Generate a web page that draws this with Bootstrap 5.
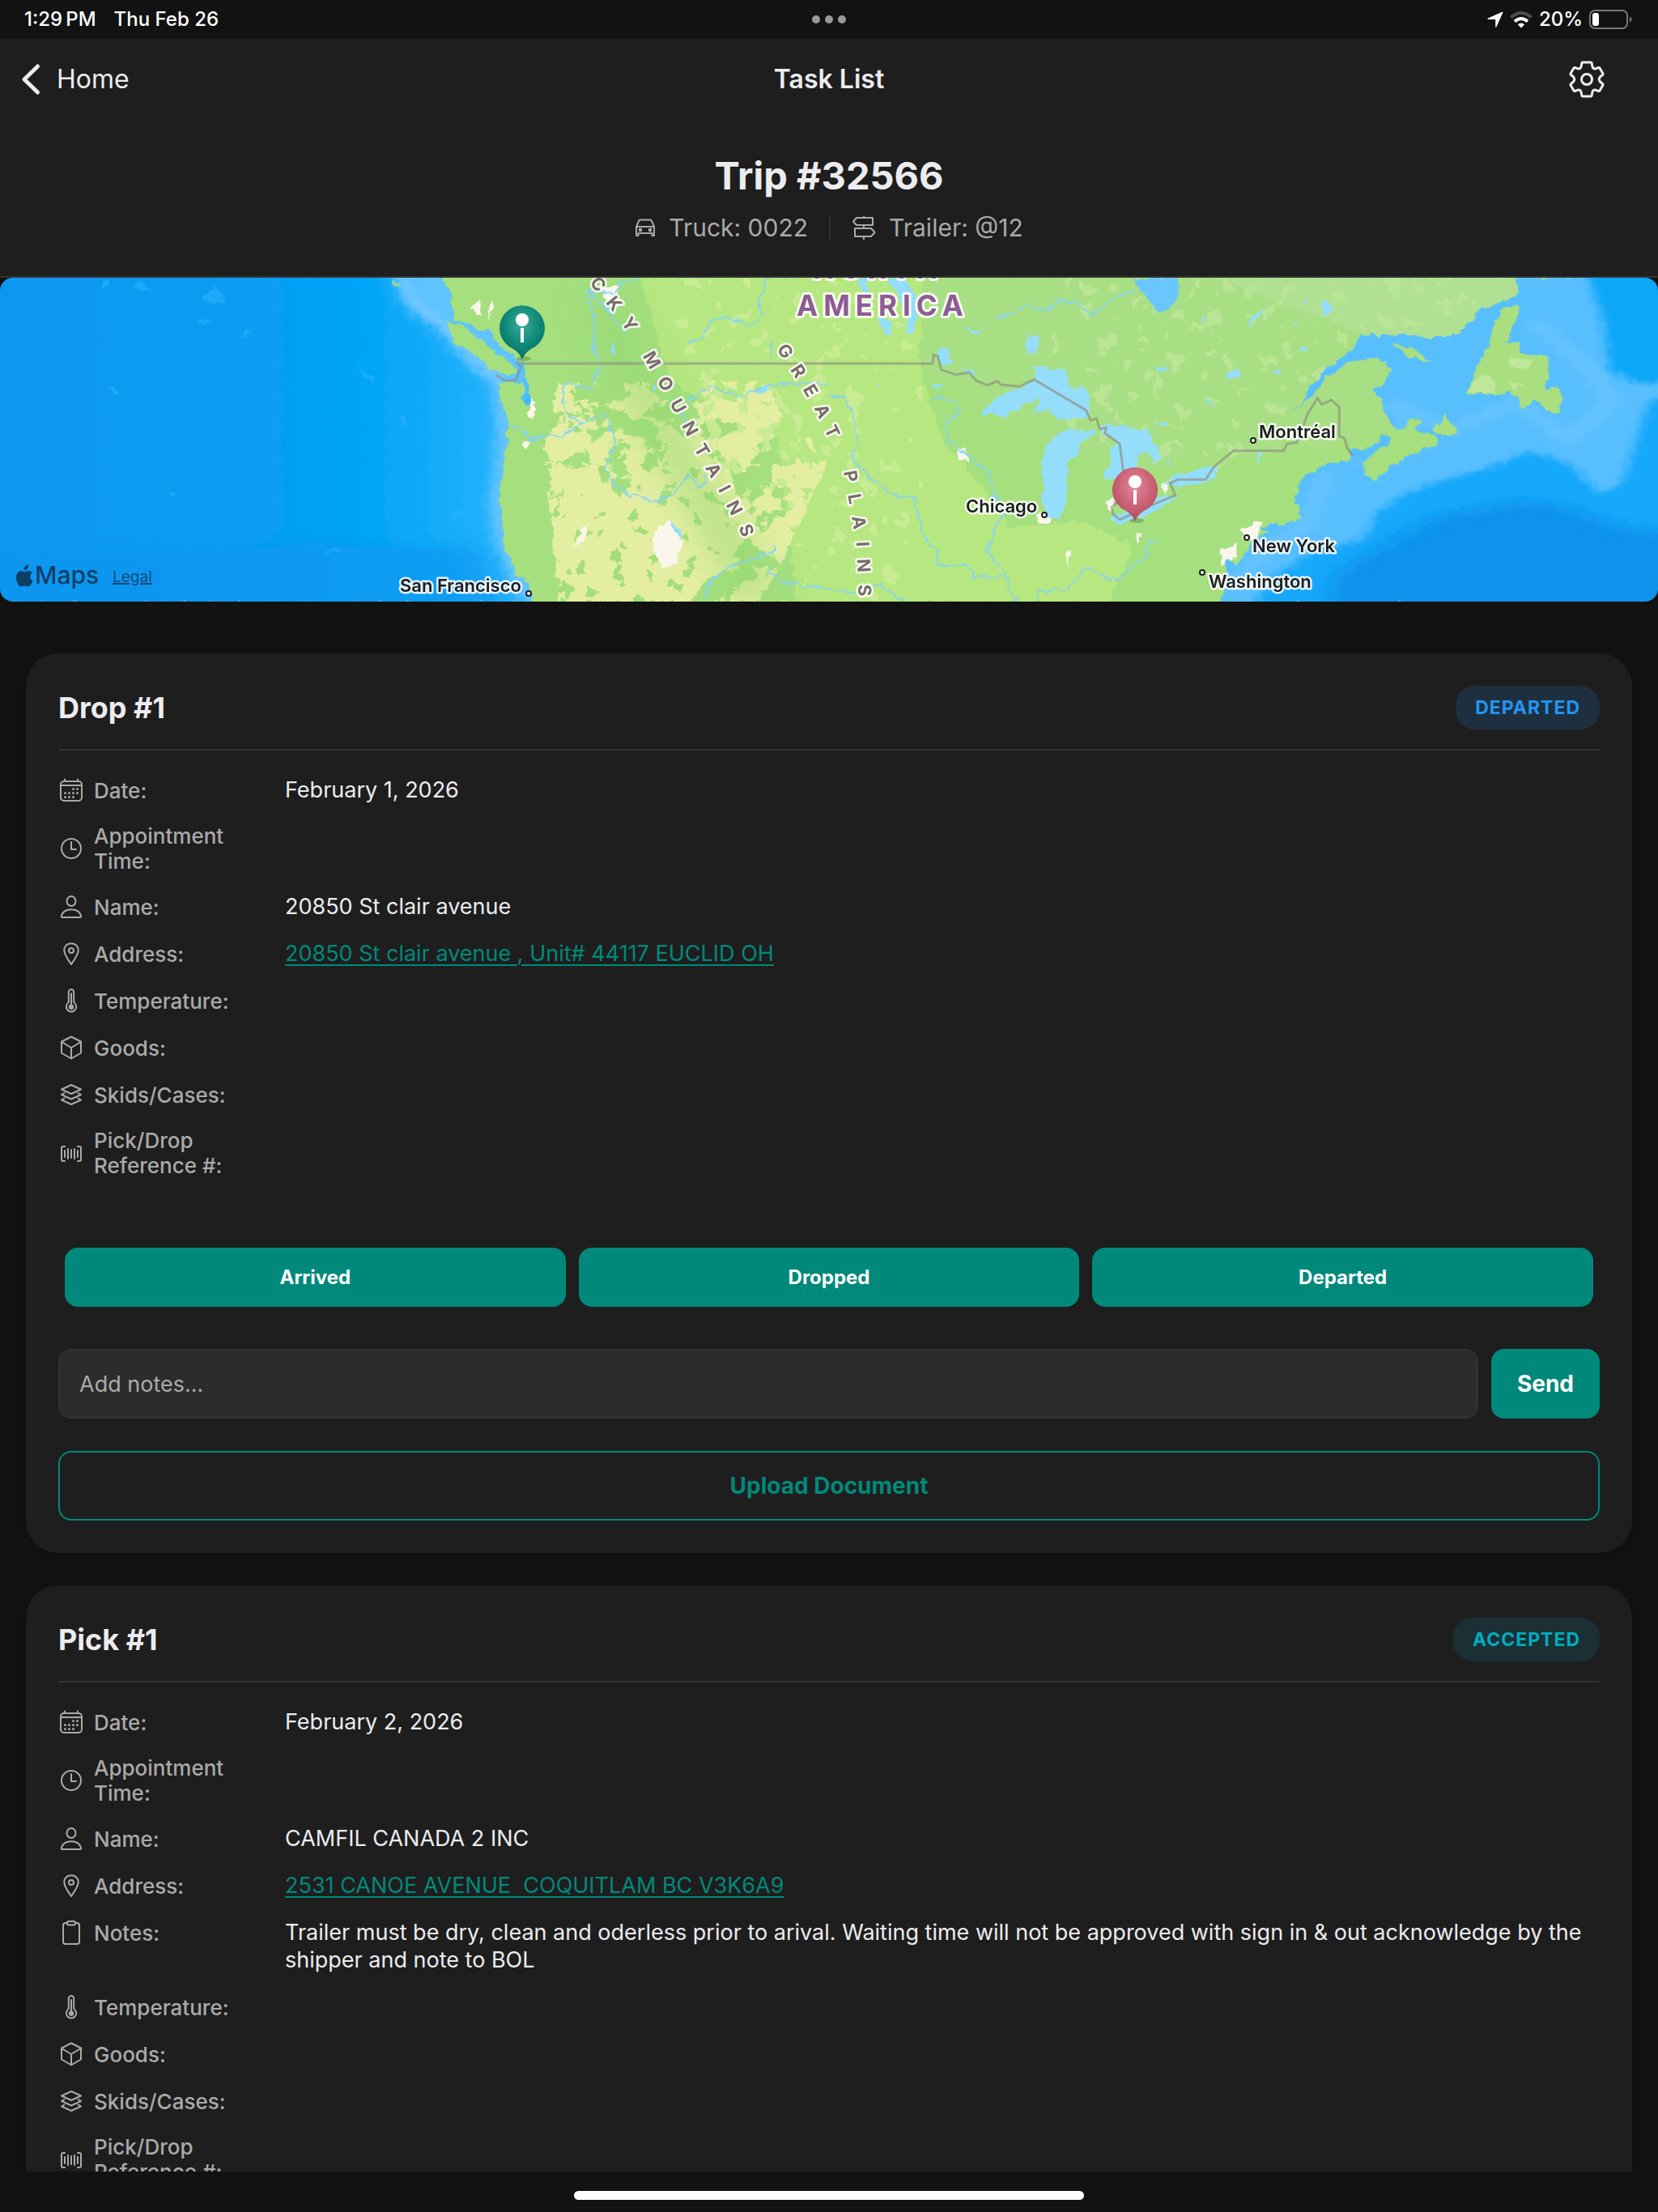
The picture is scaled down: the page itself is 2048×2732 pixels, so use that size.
<!DOCTYPE html>
<html lang="en">
<head>
<meta charset="utf-8">
<meta name="viewport" content="width=device-width, initial-scale=1">
<title>Task List</title>
<link rel="stylesheet" href="https://cdn.jsdelivr.net/npm/bootstrap@5.3.0/dist/css/bootstrap.min.css">
<style>
  :root { --teal: #00897b; --surface: #1e1e1e; --page: #121212; --line: #333333; --muted: #aaaaaa; --ink: #ececee; }
  body { font-family: Inter, "Liberation Sans", sans-serif; background: var(--page); color: var(--ink); }
  svg { display: block; flex-shrink: 0; }
  .status-strip { height: 48px; padding: 0 30px; font-size: 24px; line-height: 32px; font-weight: 500; color: #fff; }
  .status-left { gap: 22px; }
  .app-bar { height: 101px; background: var(--surface); border-bottom: 1px solid #171717; padding: 0 24px; font-size: 32px; line-height: 40px; }
  .app-bar a { color: var(--ink); gap: 18px; }
  .app-bar .btn { margin-right: 42px; }
  .trip-head { background: var(--surface); border-bottom: 2px solid var(--line); padding: 40px 0; }
  .trip-head h1 { font-size: 47px; line-height: 56px; font-weight: 700; }
  .trip-meta { font-size: 30px; line-height: 40px; color: var(--muted); margin-top: 16px; }
  .trip-split { width: 2px; height: 29px; background: var(--line); margin: 0 26px; }
  .trip-map { width: 100%; height: 400px; border-radius: 16px; overflow: hidden; }
  .stop-list { padding: 64px 32px 0; gap: 40px; min-height: 0; }
  .stop { background: var(--surface); border-radius: 40px; padding: 40px; flex-shrink: 0; box-shadow: 0 4px 16px rgba(0,0,0,.2); }
  .stop-head { padding-bottom: 24px; border-bottom: 2px solid var(--line); margin-bottom: 32px; }
  .stop-head h2 { font-size: 36px; line-height: 54px; font-weight: 700; }
  .state { height: 54px; border-radius: 24px; padding: 0 24px; font-size: 23px; line-height: 54px; font-weight: 700; letter-spacing: 1px; }
  .state-departed { color: #2196f3; background: #1e3040; }
  .state-accepted { color: #00acc1; background: #1b3034; }
  .facts { gap: 24px; margin-bottom: 86px; }
  .fact-name { width: 248px; min-height: 34px; gap: 12px; font-size: 26px; line-height: 31px; font-weight: 500; color: var(--muted); }
  .fact-name span { max-width: 190px; }
  .fact { gap: 32px; }
  .fact-value { font-size: 27px; line-height: 34px; }
  .fact-value a { color: var(--teal); text-underline-offset: 4px; text-decoration-thickness: 2px; }
  .btn-teal { --bs-btn-bg: var(--teal); --bs-btn-color: #fff; --bs-btn-hover-bg: #00796b; --bs-btn-hover-color: #fff; --bs-btn-border-width: 0; --bs-btn-border-radius: 16px; font-weight: 700; }
  .steps { gap: 16px; padding: 0 8px; margin-bottom: 52px; }
  .steps .btn { height: 73px; font-size: 24px; line-height: 32px; }
  .note-row { gap: 16px; margin-bottom: 40px; }
  .note-row .form-control { height: 86px; background: #2c2c2c; border: 2px solid var(--line); border-radius: 16px; color: var(--ink); font-size: 27px; padding: 0 24px; }
  .note-row .form-control::placeholder { color: var(--muted); opacity: 1; }
  .note-row .btn { height: 86px; font-size: 28px; padding: 0 32px; }
  .btn-upload { height: 86px; border: 2px solid var(--teal); border-radius: 16px; color: var(--teal); font-size: 28px; font-weight: 700; }
  .home-strip { height: 50px; }
  .home-strip span { width: 630px; height: 11px; border-radius: 6px; background: #fff; margin-top: 24px; }
  .ic { fill: none; stroke: var(--muted); stroke-width: 2; stroke-linejoin: round; stroke-linecap: round; }
  .rv { fill: none; stroke: #86d3f6; stroke-width: 2; vector-effect: non-scaling-stroke; }
  .frontier { fill: none; stroke: #8c8d80; stroke-opacity: .65; stroke-width: 3; vector-effect: non-scaling-stroke; }
  .tag { font-size: 22px; font-weight: 600; fill: #1d1d1f; stroke: #fff; stroke-opacity: .85; stroke-width: 5; stroke-linejoin: round; paint-order: stroke; }
  .relief { font-size: 22px; font-weight: 700; fill: #7a6b68; stroke: #fff; stroke-opacity: .85; stroke-width: 5; stroke-linejoin: round; paint-order: stroke; }
  .realm { font-size: 35px; font-weight: 700; fill: #905a96; stroke: #fff; stroke-opacity: .85; stroke-width: 6; stroke-linejoin: round; paint-order: stroke; letter-spacing: 7px; }
  .town { fill: #fff; stroke: #1d1d1f; stroke-width: 2; }
</style>
</head>
<body>
<svg class="d-none" aria-hidden="true">
  <symbol id="i-date" viewBox="0 0 32 32"><g class="ic"><rect x="3" y="5" width="26" height="24" rx="4"/><path d="M3 10H29M8 2.500V5M24 2.500V5"/></g><g fill="#aaa"><circle cx="18.500" cy="14.500" r="1.500"/><circle cx="23.500" cy="14.500" r="1.500"/><circle cx="8.500" cy="19.500" r="1.500"/><circle cx="13.500" cy="19.500" r="1.500"/><circle cx="18.500" cy="19.500" r="1.500"/><circle cx="23.500" cy="19.500" r="1.500"/><circle cx="8.500" cy="24.500" r="1.500"/><circle cx="13.500" cy="24.500" r="1.500"/><circle cx="18.500" cy="24.500" r="1.500"/></g></symbol>
  <symbol id="i-time" viewBox="0 0 32 32"><g class="ic"><circle cx="16" cy="16" r="12"/><path d="M16 8V17H22"/></g></symbol>
  <symbol id="i-name" viewBox="0 0 32 32"><g class="ic"><ellipse cx="16" cy="9" rx="5.500" ry="6"/><path d="M5 29C3.800 29 3.600 28 4 26.800C5.600 22 10 19.300 16 19.300S26.400 22 28 26.800C28.400 28 28.200 29 27 29Z"/></g></symbol>
  <symbol id="i-pin" viewBox="0 0 32 32"><g class="ic"><path d="M16 29C14 26 7.300 17.500 7.300 11.500C7.300 6.500 11 3.300 16 3.300S24.700 6.500 24.700 11.500C24.700 17.500 18 26 16 29Z"/><circle cx="16" cy="12" r="3"/></g></symbol>
  <symbol id="i-temp" viewBox="0 0 32 32"><g class="ic"><path d="M12.800 18V5.200A3.200 3.200 0 0 1 19.200 5.200V18A6.200 6.200 0 1 1 12.800 18Z"/><path d="M16 7V23"/></g><circle cx="16" cy="23.700" r="3.200" fill="#aaa"/></symbol>
  <symbol id="i-box" viewBox="0 0 32 32"><g class="ic"><path d="M16 2.500L28 8.500V22.500L16 29.500L4 22.500V8.500ZM4.300 9L16 16L27.700 9M16 16V29"/></g></symbol>
  <symbol id="i-stack" viewBox="0 0 32 32"><g class="ic"><path d="M16 4L28 9.500L16 15L4 9.500ZM7.500 14L4 16L16 21.500L28 16L24.500 14M7.500 20.500L4 22.500L16 28L28 22.500L24.500 20.500"/></g></symbol>
  <symbol id="i-code" viewBox="0 0 32 32"><g class="ic"><path d="M8 8H6A2 2 0 0 0 4 10V24A2 2 0 0 0 6 26H8M24 8H26A2 2 0 0 1 28 10V24A2 2 0 0 1 26 26H24M8 13V21M12 11V23M16 12V22M20 11V23M24 13V21"/></g></symbol>
  <symbol id="i-note" viewBox="0 0 32 32"><g class="ic"><path d="M11 4H9A3 3 0 0 0 6 7V27A3 3 0 0 0 9 30H23A3 3 0 0 0 26 27V7A3 3 0 0 0 23 4H21"/><rect x="11" y="2" width="10" height="4.500" rx="2"/></g></symbol>
</svg>

<div class="vh-100 d-flex flex-column overflow-hidden">
  <div class="status-strip row g-0 align-items-center flex-shrink-0">
    <div class="col d-flex status-left"><span>1:29&#8239;PM</span><span>Thu Feb 26</span></div>
    <div class="col-auto"><svg width="42" height="10" viewBox="0 0 42 10" fill="#999"><circle cx="5" cy="5" r="5"/><circle cx="21" cy="5" r="5"/><circle cx="37" cy="5" r="5"/></svg></div>
    <div class="col d-flex justify-content-end align-items-center">
      <svg class="me-2" width="20" height="20" viewBox="0 0 20 20" fill="#fff"><path d="M18.500 .8C19.300 .5 19.700 1 19.300 1.800L11.500 19C11.100 20 10.200 19.800 10.200 18.800V10.400C10.200 10 10 9.900 9.700 9.900H1.300C.3 9.900 .1 9 1 8.500Z"/></svg>
      <svg class="me-2" width="28" height="21" viewBox="0 0 28 21" fill="none" stroke-width="4"><path stroke="#4c4c4c" d="M1.500 7.500Q14 -3.500 26.500 7.500"/><path stroke="#fff" d="M6 12.500Q14 5.500 22 12.500"/><path fill="#fff" d="M14 20.500L9.800 16.200Q14 12.800 18.200 16.200Z"/></svg>
      <span class="me-2">20%</span>
      <svg width="55" height="24" viewBox="0 0 55 24"><rect x="1" y="1" width="46" height="22" rx="6" fill="none" stroke="#777" stroke-width="2"/><rect x="4" y="4" width="8" height="16" rx="3" fill="#fff"/><path d="M50 8Q55 12 50 16Z" fill="#777"/></svg>
    </div>
  </div>

  <nav class="app-bar row g-0 align-items-center flex-shrink-0" aria-label="Main">
    <div class="col d-flex"><a href="#" class="d-flex align-items-center text-decoration-none"><svg width="28" height="40" viewBox="0 0 28 40" fill="none" stroke="#ececee" stroke-width="5" stroke-linecap="round" stroke-linejoin="round"><path d="M22.500 4L6 20L22.500 36"/></svg>Home</a></div>
    <div class="col-auto fw-semibold">Task List</div>
    <div class="col d-flex justify-content-end">
      <button type="button" class="btn p-0 border-0" aria-label="Settings"><svg width="44" height="46" viewBox="-22 -23 44 46" fill="none" stroke="#ececee" stroke-width="3" stroke-linejoin="round"><circle r="6.500"/><path d="M-6 -20.500Q-5.800 -21 -5 -21H5Q5.800 -21 6 -20.500L7 -15.500Q8 -12.500 11 -13.200L14.500 -14.500Q15.500 -14.700 16 -14L20 -7Q20.300 -6.300 19.500 -5.500L16.500 -3Q14 0 16.500 3L19.500 5.500Q20.300 6.300 20 7L16 14Q15.500 14.700 14.500 14.500L11 13.200Q8 12.500 7 15.500L6 20.500Q5.800 21 5 21H-5Q-5.800 21 -6 20.500L-7 15.500Q-8 12.500 -11 13.200L-14.500 14.500Q-15.500 14.700 -16 14L-20 7Q-20.300 6.300 -19.500 5.500L-16.500 3Q-14 0 -16.500 -3L-19.500 -5.500Q-20.300 -6.300 -20 -7L-16 -14Q-15.500 -14.700 -14.500 -14.500L-11 -13.200Q-8 -12.500 -7 -15.500Z"/></svg></button>
    </div>
  </nav>

  <header class="trip-head flex-shrink-0 text-center">
    <h1 class="mb-0">Trip #32566</h1>
    <div class="trip-meta d-flex justify-content-center align-items-center">
      <svg class="me-3" width="26" height="24" viewBox="0 0 26 24" fill="none" stroke="#aaa" stroke-width="2" stroke-linejoin="round"><path d="M2 22V11L5 4Q5.400 2.500 7 2.500H19Q20.600 2.500 21 4L24 11V22H21.500V19H4.500V22ZM2 11H24"/><path fill="#aaa" stroke="none" d="M5 13H9V17H5ZM17 13H21V17H17Z"/></svg>
      <span>Truck: 0022</span>
      <span class="trip-split"></span>
      <svg class="me-3" width="30" height="30" viewBox="0 0 30 30" fill="none" stroke="#aaa" stroke-width="2" stroke-linejoin="round"><path d="M15 1V3M15 12V16M15 26V30M6 3H26V12H6L2 7.500ZM4 16H24L28.500 21L24 26H4Z"/></svg>
      <span>Trailer: @12</span>
    </div>
  </header>

  <svg class="trip-map flex-shrink-0" viewBox="0 0 2048 400" preserveAspectRatio="xMidYMid slice" role="img" aria-label="Trip route map">
    <defs>
      <linearGradient id="sea" x1="0" x2="1"><stop offset="0" stop-color="#0a98f0"/><stop offset=".45" stop-color="#0b9cf3"/><stop offset=".68" stop-color="#00a4f6"/><stop offset=".9" stop-color="#1eb0fb"/><stop offset="1" stop-color="#3dbaff"/></linearGradient>
      <radialGradient id="gp" cx=".5" cy=".35" r=".7"><stop offset="0" stop-color="#3fae9d"/><stop offset=".5" stop-color="#128b7b"/><stop offset="1" stop-color="#00695c"/></radialGradient>
      <radialGradient id="rp" cx=".5" cy=".35" r=".7"><stop offset="0" stop-color="#e2899a"/><stop offset=".5" stop-color="#cd6479"/><stop offset="1" stop-color="#a8485c"/></radialGradient>
      <filter id="jag" x="0" y="0" width="1" height="1"><feTurbulence type="fractalNoise" baseFrequency=".09" numOctaves="3" seed="4"/><feDisplacementMap in="SourceGraphic" scale="11" xChannelSelector="R" yChannelSelector="G"/></filter>
      <filter id="patch" x="0" y="0" width="1" height="1"><feTurbulence type="fractalNoise" baseFrequency=".022 .026" numOctaves="4" seed="21"/><feColorMatrix values="0 0 0 0 0  0 0 0 0 0  0 0 0 0 0  40 0 0 0 -19"/><feComposite in="SourceGraphic" operator="in"/></filter>
      <filter id="fleck" x="0" y="0" width="1" height="1"><feTurbulence type="fractalNoise" baseFrequency=".045" numOctaves="3" seed="7"/><feColorMatrix values="0 0 0 0 0  0 0 0 0 0  0 0 0 0 0  30 0 0 0 -19"/><feComposite in="SourceGraphic" operator="in"/></filter>
      <filter id="soft" x="-.3" y="-.3" width="1.600" height="1.600"><feGaussianBlur stdDeviation="10"/></filter>
      <filter id="haze" x="-.4" y="-.4" width="1.800" height="1.800"><feGaussianBlur stdDeviation="22"/></filter>
      <clipPath id="eastSea"><path id="eastCoast" d="M1303 39L1300 110L1225 160L1215 200L1185 250L1130 262L1060 250L1005 255L980 320L945 370L915 430L895 500L870 540L915 475L940 410L985 350L1040 335L1065 380L1055 420L1025 460L1045 480L1048 530L1060 580L1085 600L1100 562L1125 570L1110 610L1150 628L1150 660L1100 690L1060 740L1035 790L1012 770L1015 720L1060 640L1050 620L1020 670L990 680L985 715L940 730L900 770L885 830L880 880L895 930L860 955L815 960L832 985L800 1010L790 1060L770 1100L750 1090L755 1170L740 1245H1600V30Z"/></clipPath>
      <clipPath id="westSea"><path id="westCoast" d="M-20 30H835L850 90L852 130L860 190L895 225L925 235L945 290L975 340L990 360L998 430L1005 505L990 510L990 430L965 425L942 420L945 480L958 560L960 640L950 760L945 850L950 950L952 1030L965 1080L975 1130L1000 1180L1006 1245H-20Z"/></clipPath>
    </defs>
    <g filter="url(#jag)">
      <rect x="-10" y="-10" width="2068" height="420" fill="#a5df7e"/>
      <path d="M790 0H1140L1135 110L1165 200L1240 290L1270 400H985L960 200L830 130Z" fill="#b6e781"/>
      <path d="M1140 0H1900V120L1640 210L1400 240L1260 190L1140 110Z" fill="#a9df84"/>
      <path d="M1500 0H1875V60L1800 85L1690 70Z" fill="#b0e092"/>
      <path d="M1190 400L1200 315L1330 300L1400 330L1370 400Z" fill="#b6e781"/>
      <path filter="url(#patch)" d="M690 130L960 130L1020 230L990 300L940 400H690L670 210Z" fill="#e3eea3"/>
      <path d="M700 240L735 230L760 265L820 280L850 250L870 215L900 230L915 290L890 345L850 350L830 400H700L680 330Z" fill="#e3eea3"/>
      <path filter="url(#fleck)" d="M690 130L1000 130L1020 400H690Z" fill="#a4de79"/>
      <path filter="url(#fleck)" d="M800 0H1140V400H960Z" fill="#c8eb94"/>
      <path filter="url(#fleck)" d="M1300 0H1860V60L1700 60L1500 250L1300 200Z" fill="#b9e595"/>
      <path filter="url(#haze)" d="M740 30L800 160L880 290L940 400" fill="none" stroke="#92d670" stroke-width="34" stroke-opacity=".7"/>
      <path fill="#fbf6ec" d="M582 34L594 28L596 44L588 46ZM604 28L609 34L602 50ZM742 14L762 10L768 36L758 40L750 30ZM808 315L826 300L842 316L838 352L820 360L806 336ZM718 310L726 302L722 326L711 334ZM656 150L662 154L658 175L652 170ZM1182 208L1192 212L1196 230L1185 226ZM1280 292L1298 290L1298 302L1284 304ZM1364 278L1376 272L1374 292ZM1436 252L1448 246L1440 268ZM1532 310L1560 300L1552 322L1536 326ZM1510 336L1530 328L1524 350L1508 356ZM1314 340L1322 338L1320 358ZM645 204L654 200L652 214ZM1402 312L1408 318L1404 328Z"/>
      <g transform="scale(.6531 .3333) translate(0 -39)">
        <use href="#westCoast" fill="url(#sea)"/>
        <g clip-path="url(#westSea)">
          <path filter="url(#haze)" d="M745 -20L775 150L845 250L890 340L940 430L1010 500V-20Z" fill="#5fc4ff"/>
          <path d="M755 20L780 130L842 220L890 330L945 420L955 600L950 760L940 860L950 1010L975 1140L1010 1240" fill="none" stroke="#84cdff" stroke-opacity=".7" stroke-width="30" filter="url(#soft)"/>
          <path filter="url(#haze)" d="M-200 1060L380 1060L600 1020L760 1040L900 1030L980 1350H-200Z" fill="#0a94ee" opacity=".6"/>
          <path fill="#25b0fc" opacity=".7" d="M380 110L405 70L430 120L400 138ZM375 190L400 200L380 215ZM458 255L465 228L477 245ZM672 350L700 400L712 440L690 410ZM320 830L335 835L325 855ZM615 1050L640 1040L655 1062ZM250 75L270 60L290 95ZM190 60L205 45L200 95ZM745 545L775 600L765 560ZM850 930L880 880L870 935ZM200 440L225 450L220 478Z"/>
        </g>
        <path fill="#a5df7e" d="M842 197L870 215L895 245L925 290L950 330L972 365L975 400L955 398L925 370L895 320L862 280L852 240ZM738 39L752 60L757 82L744 62Z"/>
        <path class="rv" d="M1210 39L1170 65L1165 100L1110 85L1125 200L1122 300L1135 370L1115 450L1070 430L1062 490L1075 550L1100 580L1140 545L1165 640L1148 730L1155 790L1185 840L1240 870L1270 850L1300 775L1325 820L1340 745M1100 580L1060 620L1000 640L985 595L962 580M1115 85L1150 160L1185 245M1568 430L1500 430L1450 440L1400 480L1345 440L1300 490L1290 540L1305 590M1465 1020L1470 1050L1380 1110L1345 1160L1330 1239M1450 1100L1470 1165L1568 1190M1300 280L1330 260L1340 200L1375 185L1420 220L1440 180L1435 120L1452 39M1458 275L1460 330"/>
        <path fill="#8fdcfd" d="M1265 935L1290 985L1290 1002L1278 990ZM1232 435L1240 445L1236 468ZM1155 280L1162 300L1164 335L1157 320ZM1430 465L1450 440L1455 462Z"/>
      </g>
      <g transform="translate(1024 0) scale(.6531 .3333) translate(0 -39)">
        <use href="#eastCoast" fill="#59bfff"/>
        <g clip-path="url(#eastSea)">
          <path filter="url(#soft)" d="M1330 200L1440 380L1480 500L1400 640L1300 500L1180 600L1060 500L1120 640L1000 740M940 760L900 960L830 1030L770 1180" fill="none" stroke="#7ccfff" stroke-width="34" stroke-opacity=".35"/>
          <path filter="url(#soft)" d="M1420 -60L1450 120L1465 200L1475 380L1530 430L1700 410V-60Z" fill="#0aa7f8"/>
          <path filter="url(#soft)" d="M1330 680L1250 740L1110 820L1040 900L1010 1010L910 1060L840 1150L780 1330H1740V400L1550 500L1500 800L1460 840L1400 730Z" fill="#14a8fa"/>
          <path filter="url(#haze)" d="M1340 860L1150 920L1040 1040L960 1130L920 1400H1800V1050L1500 960Z" fill="#0793ec"/>
        </g>
        <path fill="#aadf80" d="M1275 150L1308 145L1295 215L1280 290L1305 275L1305 315L1360 325L1362 400L1350 450L1375 440L1388 490L1378 545L1355 530L1340 490L1310 530L1300 470L1205 470L1215 420L1230 350L1245 290L1260 200ZM1062 280L1100 295L1138 350L1100 335ZM1168 540L1178 590L1190 610L1160 630L1142 610Z"/>
        <path fill="#bfe79a" d="M1215 425L1240 400L1262 420L1262 465H1210ZM1285 330L1330 345L1320 380L1290 370ZM1280 420L1310 430L1300 460Z"/>
        <path fill="#94defc" d="M288 545L310 495L350 455L392 420L385 370L400 360L420 378L448 380L452 440L490 445L495 530L485 560L430 560L415 525L385 545L405 485L365 510L335 555L310 540ZM402 720L415 650L450 600L505 610L490 635L475 650L470 700L450 720L450 790L448 880L435 935L410 920L402 870L405 800ZM515 585L555 590L605 605L615 650L630 700L620 720L600 690L585 690L585 750L560 780L520 785L515 770L535 740L530 680L548 655L520 620ZM530 930L560 905L620 850L655 845L640 880L600 920L560 945L535 945ZM635 800L650 770L690 760L720 735L735 740L730 780L700 805L650 812ZM110 39H145L165 120V230L148 250V160ZM90 180L118 200V250L105 250ZM60 39H72V110L60 100ZM372 255L395 250L400 300L392 325L375 320ZM205 310L225 300L232 345L215 365L205 350ZM255 220L275 235L295 235L270 252ZM195 440L218 425L205 450ZM790 230L800 180L825 155ZM928 140L940 122L955 155L940 180ZM750 400L775 375L780 400L765 410ZM840 378L858 385L850 402ZM715 480L728 515L716 505ZM620 370L645 378L640 388L620 385ZM895 112L905 118L902 138ZM880 205L890 208L884 218ZM885 318L900 290L905 310ZM705 185L715 190L708 202ZM808 680H817L812 745ZM620 578L642 575L640 586H622ZM640 720L648 712L640 745ZM245 370L270 385L272 405ZM85 425L98 430L90 440Z"/>
        <path fill="#69c6ff" d="M575 39H660L665 90L640 160L625 168L600 110Z"/>
        <path class="rv" d="M0 470L30 480L45 540L55 640L45 710L75 770L120 845L160 850L180 1000L205 1050L205 1110L255 1100L280 1150L320 1150L335 1140M195 480L235 490L250 530L220 580L225 640L270 710L305 770L310 850L335 900L315 960L300 1050L330 1130L355 1239M390 1239L400 1200L450 1190L490 1110L520 1150L550 1165L570 1110L600 1080L605 1010L620 1020M580 80L545 110L495 175L470 135L440 120L410 160L375 140L340 175L315 185M0 1190L60 1210L95 1170L140 1239"/>
      </g>
    </g>
    <g transform="scale(.6531 .3333) translate(0 -39)"><path class="frontier" d="M938 400L955 420L975 420L985 370L978 357H1568"/></g>
    <g transform="translate(1024 0) scale(.6531 .3333) translate(0 -39)"><path class="frontier" d="M0 357H196L198 325L206 330L212 380L240 398L265 390L278 420L300 438L318 422L325 435L360 442L388 416L486 530L495 568L506 560L512 600L524 594L522 615L550 655L562 840L535 890L537 915L550 935L600 890L655 845L645 800L660 787H712L728 740L765 680H860L866 655L885 650L905 545L924 485L932 508L950 492L965 518V625L975 635L980 670L990 698"/></g>

    <text class="realm" x="1004" y="1">NORTH</text>
    <text class="realm" x="984" y="47">AMERICA</text>
    <path id="rocky" fill="none" d="M693 -44L724 2L762 48L787 85L811 127L834 168L860 216L890 268L916 318L940 380"/>
    <path id="plains" fill="none" d="M959 88L988 132L1010 170L1028 208L1043 245L1051 290L1058 330L1061 400L1061 440"/>
    <text class="relief" letter-spacing="15"><textPath href="#rocky" startOffset="0">ROCKY</textPath></text>
    <text class="relief" letter-spacing="15"><textPath href="#rocky" startOffset="173">MOUNTAINS</textPath></text>
    <text class="relief" letter-spacing="14"><textPath href="#plains" startOffset="0">GREAT</textPath></text>
    <text class="relief" letter-spacing="15"><textPath href="#plains" startOffset="173">PLAINS</textPath></text>

    <g class="tag">
      <text x="494" y="388">San Francisco</text><text x="1193" y="290">Chicago</text><text x="1555" y="198">Montréal</text><text x="1547" y="339">New York</text><text x="1493" y="383">Washington</text>
    </g>
    <g class="town"><circle cx="653" cy="390" r="3"/><circle cx="1290" cy="293" r="3"/><circle cx="1548" cy="201" r="3"/><circle cx="1540" cy="321" r="3"/><circle cx="1485" cy="364" r="3"/></g>

    <g transform="translate(645 62)"><ellipse cx="2" cy="38" rx="9" ry="3" fill="#000" opacity=".2"/><path fill="url(#gp)" d="M0 39Q-3 31 -11 26A28 28 0 1 1 11 26Q3 31 0 39Z"/><circle cy="-10" r="8" fill="#fff"/><path d="M-2 0H2V18H-2Z" fill="#fff"/></g>
    <g transform="translate(1402 262)"><ellipse cx="2" cy="38" rx="9" ry="3" fill="#000" opacity=".2"/><path fill="url(#rp)" d="M0 39Q-3 31 -11 26A28 28 0 1 1 11 26Q3 31 0 39Z"/><circle cy="-10" r="8" fill="#fff"/><path d="M-2 0H2V18H-2Z" fill="#fff"/></g>

    <g fill="#0b3f63">
      <path d="M35 354C35.500 358 33 361.500 29.500 361.500C29.300 358 32 354.500 35 354Z"/>
      <path d="M30 363.500C32 363.500 33.500 362 35.500 362C37.500 362 39 363 40 364.500C36 367 36.500 372.500 40.500 374.500C39.500 377.500 37 381.500 34.500 381.500C33 381.500 32 380.500 30 380.500S27 381.500 25.500 381.500C23 381.500 20 375.500 20 370.500C20 365 23 362.300 26 362.300C27.700 362.300 28.800 363.500 30 363.500Z"/>
      <text x="43" y="378" font-size="30" font-weight="500">Maps</text>
    </g>
    <a href="#"><text x="139" y="376" font-size="19" fill="#0b4a78" text-decoration="underline">Legal</text></a>
  </svg>

  <main class="stop-list flex-grow-1 d-flex flex-column overflow-hidden">
    <section class="stop">
      <div class="stop-head d-flex justify-content-between align-items-center"><h2 class="mb-0">Drop #1</h2><span class="state state-departed">DEPARTED</span></div>
      <div class="facts d-flex flex-column">
        <div class="fact d-flex"><div class="fact-name d-flex align-items-center"><svg width="32" height="32"><use href="#i-date"/></svg><span>Date:</span></div><div class="fact-value">February 1, 2026</div></div>
        <div class="fact d-flex"><div class="fact-name d-flex align-items-center"><svg width="32" height="32"><use href="#i-time"/></svg><span>Appointment Time:</span></div></div>
        <div class="fact d-flex"><div class="fact-name d-flex align-items-center"><svg width="32" height="32"><use href="#i-name"/></svg><span>Name:</span></div><div class="fact-value">20850 St clair avenue</div></div>
        <div class="fact d-flex"><div class="fact-name d-flex align-items-center"><svg width="32" height="32"><use href="#i-pin"/></svg><span>Address:</span></div><div class="fact-value"><a href="#">20850 St clair avenue , Unit# 44117 EUCLID OH</a></div></div>
        <div class="fact d-flex"><div class="fact-name d-flex align-items-center"><svg width="32" height="32"><use href="#i-temp"/></svg><span>Temperature:</span></div></div>
        <div class="fact d-flex"><div class="fact-name d-flex align-items-center"><svg width="32" height="32"><use href="#i-box"/></svg><span>Goods:</span></div></div>
        <div class="fact d-flex"><div class="fact-name d-flex align-items-center"><svg width="32" height="32"><use href="#i-stack"/></svg><span>Skids/Cases:</span></div></div>
        <div class="fact d-flex"><div class="fact-name d-flex align-items-center"><svg width="32" height="32"><use href="#i-code"/></svg><span>Pick/Drop Reference #:</span></div></div>
      </div>
      <div class="steps d-flex">
        <button type="button" class="btn btn-teal w-100">Arrived</button>
        <button type="button" class="btn btn-teal w-100">Dropped</button>
        <button type="button" class="btn btn-teal w-100">Departed</button>
      </div>
      <div class="note-row d-flex">
        <label class="visually-hidden" for="drop-note">Add notes</label>
        <input id="drop-note" type="text" class="form-control" placeholder="Add notes...">
        <button type="button" class="btn btn-teal">Send</button>
      </div>
      <button type="button" class="btn btn-upload w-100">Upload Document</button>
    </section>

    <section class="stop">
      <div class="stop-head d-flex justify-content-between align-items-center"><h2 class="mb-0">Pick #1</h2><span class="state state-accepted">ACCEPTED</span></div>
      <div class="facts d-flex flex-column">
        <div class="fact d-flex"><div class="fact-name d-flex align-items-center"><svg width="32" height="32"><use href="#i-date"/></svg><span>Date:</span></div><div class="fact-value">February 2, 2026</div></div>
        <div class="fact d-flex"><div class="fact-name d-flex align-items-center"><svg width="32" height="32"><use href="#i-time"/></svg><span>Appointment Time:</span></div></div>
        <div class="fact d-flex"><div class="fact-name d-flex align-items-center"><svg width="32" height="32"><use href="#i-name"/></svg><span>Name:</span></div><div class="fact-value">CAMFIL CANADA 2 INC</div></div>
        <div class="fact d-flex"><div class="fact-name d-flex align-items-center"><svg width="32" height="32"><use href="#i-pin"/></svg><span>Address:</span></div><div class="fact-value"><a href="#">2531 CANOE AVENUE&nbsp; COQUITLAM BC V3K6A9</a></div></div>
        <div class="fact d-flex align-items-start"><div class="fact-name d-flex align-items-center flex-shrink-0"><svg width="32" height="32"><use href="#i-note"/></svg><span>Notes:</span></div><div class="fact-value">Trailer must be dry, clean and oderless prior to arival. Waiting time will not be approved with sign in &amp; out acknowledge by the shipper and note to BOL</div></div>
        <div class="fact d-flex"><div class="fact-name d-flex align-items-center"><svg width="32" height="32"><use href="#i-temp"/></svg><span>Temperature:</span></div></div>
        <div class="fact d-flex"><div class="fact-name d-flex align-items-center"><svg width="32" height="32"><use href="#i-box"/></svg><span>Goods:</span></div></div>
        <div class="fact d-flex"><div class="fact-name d-flex align-items-center"><svg width="32" height="32"><use href="#i-stack"/></svg><span>Skids/Cases:</span></div></div>
        <div class="fact d-flex"><div class="fact-name d-flex align-items-center"><svg width="32" height="32"><use href="#i-code"/></svg><span>Pick/Drop Reference #:</span></div></div>
      </div>
    </section>
  </main>
  <div class="home-strip flex-shrink-0 d-flex justify-content-center"><span></span></div>
</div>
<script src="https://cdn.jsdelivr.net/npm/bootstrap@5.3.0/dist/js/bootstrap.bundle.min.js"></script>
</body>
</html>
